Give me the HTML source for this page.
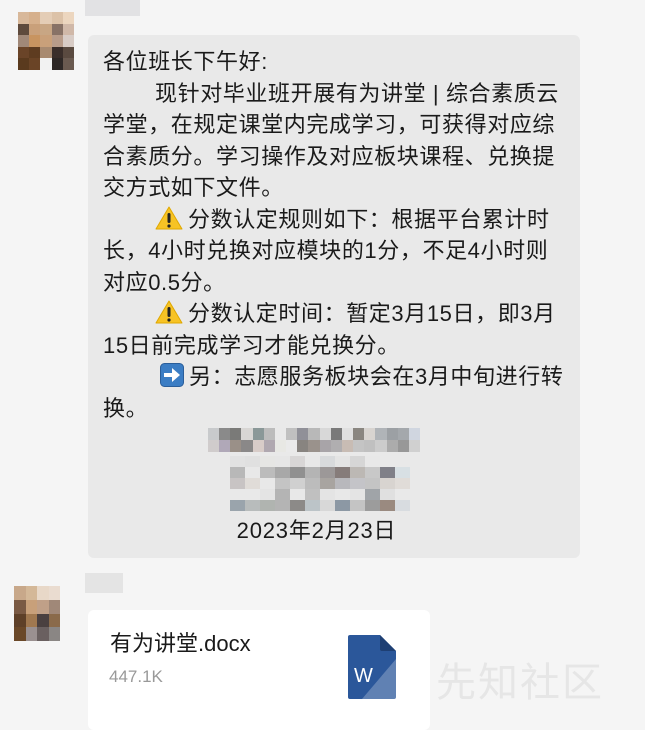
<!DOCTYPE html>
<html><head><meta charset="utf-8"><style>
body{margin:0;width:645px;height:717px;background:#f5f5f5;position:relative;overflow:hidden;font-family:"Liberation Sans","Noto Sans CJK SC",sans-serif;color:#1a1a1a}
.a{position:absolute}
.px{position:absolute;display:grid}
.px div{width:100%;height:100%}
.bub{position:absolute;left:88px;top:35px;width:492px;height:523px;background:#e9e9e9;border-radius:6px}
.t{position:absolute;left:103px;top:46px;font-size:22px;letter-spacing:0.6px;line-height:31.5px;white-space:nowrap}
.ind{padding-left:52px}
.ic{display:inline-block;vertical-align:-3px;margin-right:5px}
</style></head><body>
<div class="px" style="left:18px;top:12px;width:56px;height:58px;grid-template-columns:repeat(5,1fr);grid-template-rows:repeat(5,1fr)">
<div style="background:#d8b89a"></div><div style="background:#d6b08c"></div><div style="background:#e4cdb6"></div><div style="background:#dcc2a8"></div><div style="background:#ecd6bf"></div>
<div style="background:#5e4a3c"></div><div style="background:#c9a07a"></div><div style="background:#c8a684"></div><div style="background:#887266"></div><div style="background:#d0b8a8"></div>
<div style="background:#a08878"></div><div style="background:#c89460"></div><div style="background:#c9a07a"></div><div style="background:#b89c8a"></div><div style="background:#d8ccc6"></div>
<div style="background:#6a4428"></div><div style="background:#5e3c20"></div><div style="background:#a88a70"></div><div style="background:#3a2e2a"></div><div style="background:#5a4a40"></div>
<div style="background:#5a3a1e"></div><div style="background:#6a4426"></div><div style="background:#f2f2f2"></div><div style="background:#2e2826"></div><div style="background:#6a5a50"></div>
</div>
<div class="a" style="left:85px;top:0;width:55px;height:16px;background:#e2e2e4"></div>
<div class="bub"></div>
<div class="t">
<div>各位班长下午好:</div>
<div class="ind">现针对毕业班开展有为讲堂 | 综合素质云</div>
<div>学堂，在规定课堂内完成学习，可获得对应综</div>
<div>合素质分。学习操作及对应板块课程、兑换提</div>
<div>交方式如下文件。</div>
<div class="ind"><svg class="ic" width="28" height="24" viewBox="0 0 28 24"><path d="M14 1 L27 23 L1 23 Z" fill="#f7c325" stroke="#e0a800" stroke-width="1" stroke-linejoin="round"/><rect x="12.5" y="7" width="3" height="10" rx="1.5" fill="#222"/><circle cx="14" cy="20" r="1.6" fill="#222"/></svg>分数认定规则如下：根据平台累计时</div>
<div>长，4小时兑换对应模块的1分，不足4小时则</div>
<div>对应0.5分。</div>
<div class="ind"><svg class="ic" width="28" height="24" viewBox="0 0 28 24"><path d="M14 1 L27 23 L1 23 Z" fill="#f7c325" stroke="#e0a800" stroke-width="1" stroke-linejoin="round"/><rect x="12.5" y="7" width="3" height="10" rx="1.5" fill="#222"/><circle cx="14" cy="20" r="1.6" fill="#222"/></svg>分数认定时间：暂定3月15日，即3月</div>
<div>15日前完成学习才能兑换分。</div>
<div class="ind"><span style="display:inline-block;width:5px"></span><svg class="ic" width="24" height="24" viewBox="0 0 24 24"><rect x="0.5" y="0.5" width="23" height="23" rx="4" fill="#3b7dc4" stroke="#2a5e9a"/><path d="M4 10 H12 V5 L20 12 L12 19 V14 H4 Z" fill="#fff"/></svg>另：志愿服务板块会在3月中旬进行转</div>
<div>换。</div>
</div>
<div class="px" style="left:208px;top:428px;width:212px;height:24px;grid-template-columns:repeat(19,1fr);grid-template-rows:repeat(2,1fr)">
<div style="background:#c8cacc"></div><div style="background:#8a8a8a"></div><div style="background:#7a7a78"></div><div style="background:#d8d6d4"></div><div style="background:#8a9898"></div><div style="background:#bcbcbc"></div><div style="background:#e9e9e9"></div><div style="background:#c0c0c0"></div><div style="background:#909098"></div><div style="background:#b8b8b8"></div><div style="background:#d8d8d8"></div><div style="background:#7a7a7a"></div><div style="background:#e0e0e0"></div><div style="background:#8a8680"></div><div style="background:#d8d4d0"></div><div style="background:#b0b4b8"></div><div style="background:#9ca0a4"></div><div style="background:#a4a8ac"></div><div style="background:#d0d6e0"></div>
<div style="background:#d0cccc"></div><div style="background:#b0a8b8"></div><div style="background:#9a9088"></div><div style="background:#8a8888"></div><div style="background:#d8ccc8"></div><div style="background:#b0a8b0"></div><div style="background:#e8e8e4"></div><div style="background:#eaeaea"></div><div style="background:#888480"></div><div style="background:#9a928c"></div><div style="background:#a8a4a8"></div><div style="background:#b0aeb0"></div><div style="background:#c8bcb4"></div><div style="background:#c4c4c4"></div><div style="background:#c0c0c0"></div><div style="background:#cccccc"></div><div style="background:#acacac"></div><div style="background:#989898"></div><div style="background:#d0d0d0"></div>
</div>
<div class="px" style="left:230px;top:456px;width:180px;height:55px;grid-template-columns:repeat(12,1fr);grid-template-rows:repeat(5,1fr)">
<div style="background:#e2e2e2"></div><div style="background:#e0e0e0"></div><div style="background:#e6e6e4"></div><div style="background:#e6e6e6"></div><div style="background:#d8d6d6"></div><div style="background:#e8e8e8"></div><div style="background:#d8dadc"></div><div style="background:#e4e4e4"></div><div style="background:#d6d6d6"></div><div style="background:#e8e8e8"></div><div style="background:#e9e9e9"></div><div style="background:#e9e9e9"></div>
<div style="background:#b8b8b8"></div><div style="background:#e8e8e8"></div><div style="background:#bcbcbc"></div><div style="background:#a8a8a8"></div><div style="background:#909090"></div><div style="background:#b4b4b4"></div><div style="background:#9c9898"></div><div style="background:#867c7a"></div><div style="background:#bcb8b4"></div><div style="background:#c8c8c8"></div><div style="background:#808088"></div><div style="background:#d8e0e4"></div>
<div style="background:#c8c4c4"></div><div style="background:#e0dcd8"></div><div style="background:#e8e8e8"></div><div style="background:#c4c4c4"></div><div style="background:#d0d0d0"></div><div style="background:#bcbcbc"></div><div style="background:#a8a4a0"></div><div style="background:#b8b8bc"></div><div style="background:#c4c4c8"></div><div style="background:#c4c4c4"></div><div style="background:#d8d4d0"></div><div style="background:#e0dcd8"></div>
<div style="background:#e9e9e9"></div><div style="background:#e9e9e9"></div><div style="background:#e4e4e4"></div><div style="background:#b4b4b4"></div><div style="background:#e8e8e8"></div><div style="background:#c0c0c0"></div><div style="background:#e4e4e4"></div><div style="background:#e8e8e8"></div><div style="background:#e4e4e4"></div><div style="background:#a0a4a8"></div><div style="background:#e0e0e0"></div><div style="background:#e9e9e9"></div>
<div style="background:#9aa4ac"></div><div style="background:#b8bcbc"></div><div style="background:#b0b4b0"></div><div style="background:#b4b4b4"></div><div style="background:#8c8a88"></div><div style="background:#bcc4c8"></div><div style="background:#d8d8d8"></div><div style="background:#8c98a4"></div><div style="background:#c4c4c4"></div><div style="background:#9c9c9c"></div><div style="background:#9a8a80"></div><div style="background:#d8dce0"></div>
</div>
<div class="a" style="left:-6px;top:517px;width:645px;text-align:center;font-size:22px;letter-spacing:0.8px;line-height:28px">2023年2月23日</div>
<div class="px" style="left:14px;top:586px;width:46px;height:55px;grid-template-columns:repeat(4,1fr);grid-template-rows:repeat(4,1fr)">
<div style="background:#c8a88a"></div><div style="background:#d4b898"></div><div style="background:#e8d8c8"></div><div style="background:#eadcd0"></div>
<div style="background:#7a5a44"></div><div style="background:#c8a07a"></div><div style="background:#c0a088"></div><div style="background:#a08878"></div>
<div style="background:#5e4028"></div><div style="background:#a07850"></div><div style="background:#4a4040"></div><div style="background:#8a6a4a"></div>
<div style="background:#6a4828"></div><div style="background:#9a9090"></div><div style="background:#6a6060"></div><div style="background:#8a8684"></div>
</div>
<div class="a" style="left:85px;top:573px;width:38px;height:20px;background:#e4e4e4"></div>
<div class="a" style="left:88px;top:610px;width:342px;height:120px;background:#fff;border-radius:6px"></div>
<div class="a" style="left:110px;top:626px;font-size:22px">有为讲堂.docx</div>
<div class="a" style="left:109px;top:667px;font-size:17px;color:#999">447.1K</div>
<svg class="a" style="left:348px;top:635px" width="48" height="64" viewBox="0 0 48 64"><path d="M2 0 H32 L48 16 V62 a2 2 0 0 1 -2 2 H2 a2 2 0 0 1 -2 -2 V2 a2 2 0 0 1 2 -2Z" fill="#2b579a"/><path d="M32 0 L48 16 H34 a2 2 0 0 1 -2 -2Z" fill="#1e3f73"/><path d="M48 24 V64 H14 Z" fill="#fff" opacity=".25"/><text x="6" y="47" font-size="20" fill="#fff" font-family="Liberation Sans">W</text></svg>
<div class="a" style="left:436px;top:650px;font-size:40px;color:#e6e6e6;font-family:'Noto Sans CJK SC',sans-serif;letter-spacing:2px">先知社区</div>
</body></html>
